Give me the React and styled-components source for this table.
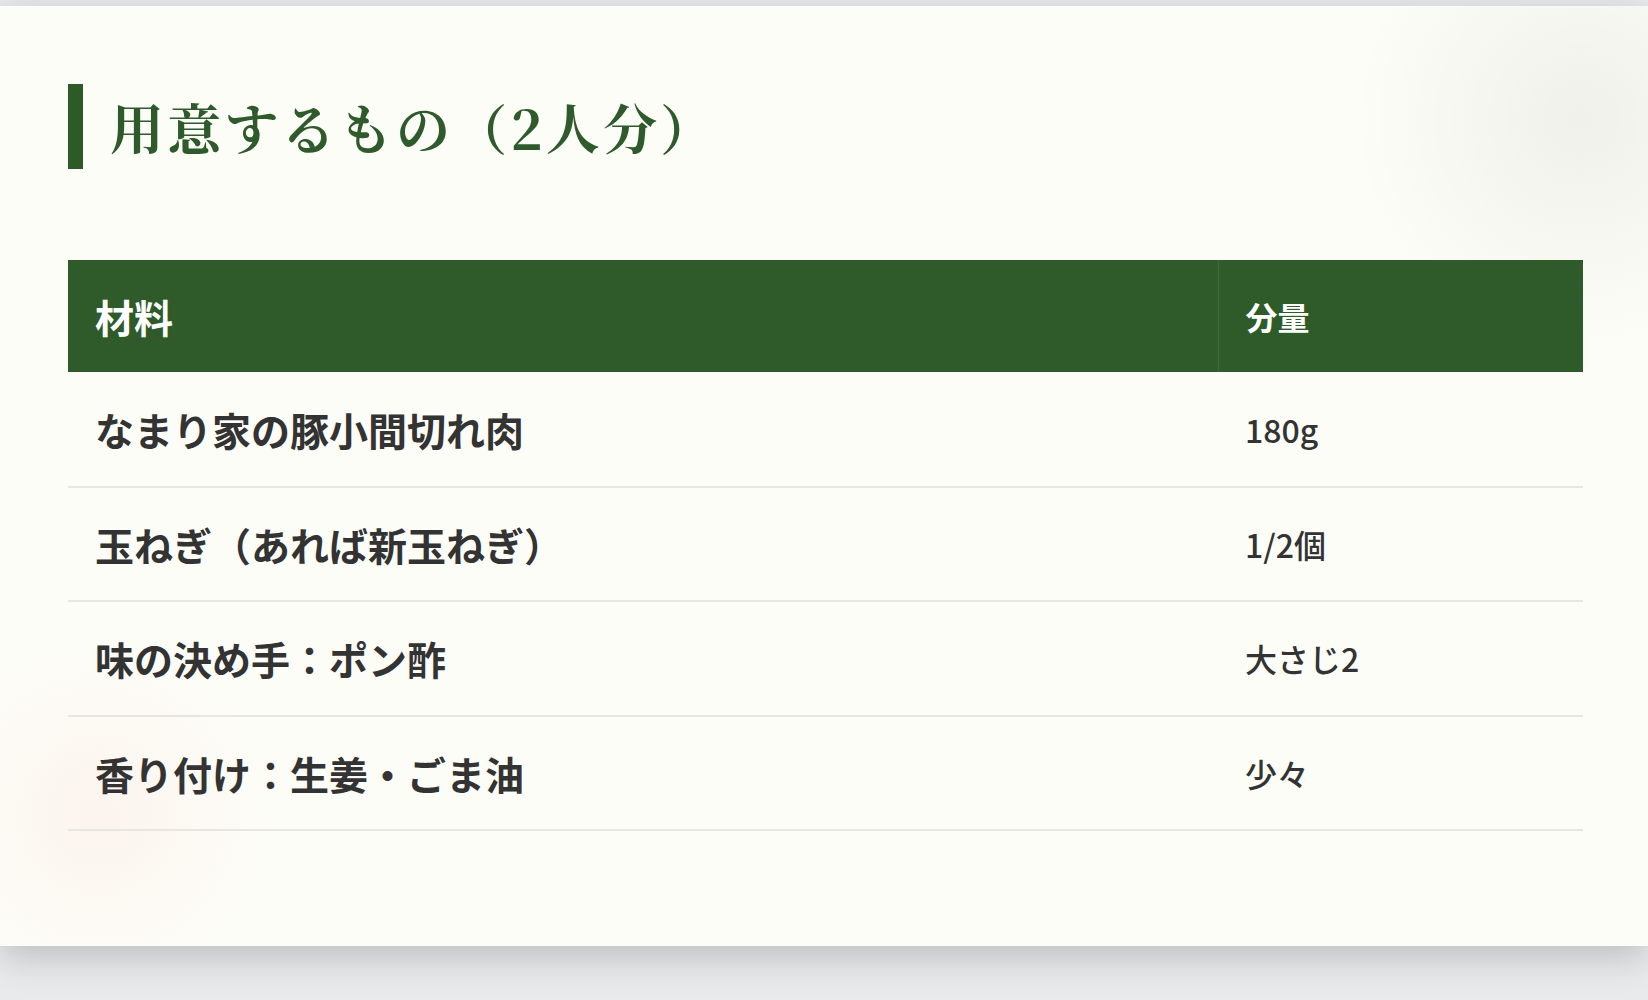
import React from "react";
import styled, { createGlobalStyle } from "styled-components";

const GlobalStyle = createGlobalStyle`
  html, body {
    margin: 0;
    padding: 0;
    background: #e9eaec;
  }
  body {
    font-family: "Noto Sans CJK JP", "Noto Sans", sans-serif;
  }
`;

const Page = styled.div`
  height: 1000px;
  padding-top: 6px;
  box-sizing: border-box;
  overflow: hidden;
`;

const Card = styled.section`
  height: 940px;
  box-sizing: border-box;
  padding: 78px 65px 0 68px;
  background:
    radial-gradient(circle at 96% 12%, rgba(0, 0, 0, 0.05), rgba(0, 0, 0, 0) 230px),
    radial-gradient(circle at 6% 86%, rgba(245, 195, 185, 0.16), rgba(245, 195, 185, 0) 170px),
    #fdfdf8;
  box-shadow: 0 10px 36px rgba(0, 0, 0, 0.2);
`;

const Heading = styled.h2`
  display: flex;
  align-items: center;
  height: 85px;
  margin: 0 0 91px;
  padding-left: 27px;
  border-left: 15px solid #2d5b28;
  font-family: "Noto Serif CJK JP", "Liberation Serif", "Noto Sans CJK JP", serif;
  font-size: 54px;
  font-weight: 700;
  letter-spacing: 3.2px;
  color: #2f5a2b;
`;

const Table = styled.table`
  width: 1515px;
  border-collapse: collapse;
  table-layout: fixed;
`;

const HeadCell = styled.th`
  width: ${(p) => (p.$qty ? "auto" : "1150px")};
  height: 112px;
  padding: 0 27px;
  box-sizing: border-box;
  background: #2e5b29;
  border-left: ${(p) => (p.$qty ? "1px solid #3b6a35" : "none")};
  text-align: left;
  color: #ffffff;
  font-size: ${(p) => (p.$qty ? "32px" : "39px")};
  font-weight: 700;
`;

const Row = styled.tr`
  border-bottom: 2px solid #e7e6e1;
`;

const Cell = styled.td`
  height: 114.5px;
  padding: 0 27px;
  box-sizing: border-box;
  color: #333333;
  font-size: ${(p) => (p.$qty ? "32px" : "39px")};
  font-weight: ${(p) => (p.$qty ? 500 : 700)};
`;

const items = [
  ["なまり家の豚小間切れ肉", "180g"],
  ["玉ねぎ（あれば新玉ねぎ）", "1/2個"],
  ["味の決め手：ポン酢", "大さじ2"],
  ["香り付け：生姜・ごま油", "少々"],
];

export default function App() {
  return (
    <>
      <GlobalStyle />
      <Page>
        <Card>
          <Heading>用意するもの（2人分）</Heading>
          <Table>
            <thead>
              <tr>
                <HeadCell>材料</HeadCell>
                <HeadCell $qty>分量</HeadCell>
              </tr>
            </thead>
            <tbody>
              {items.map(([name, qty]) => (
                <Row key={name}>
                  <Cell>{name}</Cell>
                  <Cell $qty>{qty}</Cell>
                </Row>
              ))}
            </tbody>
          </Table>
        </Card>
      </Page>
    </>
  );
}
